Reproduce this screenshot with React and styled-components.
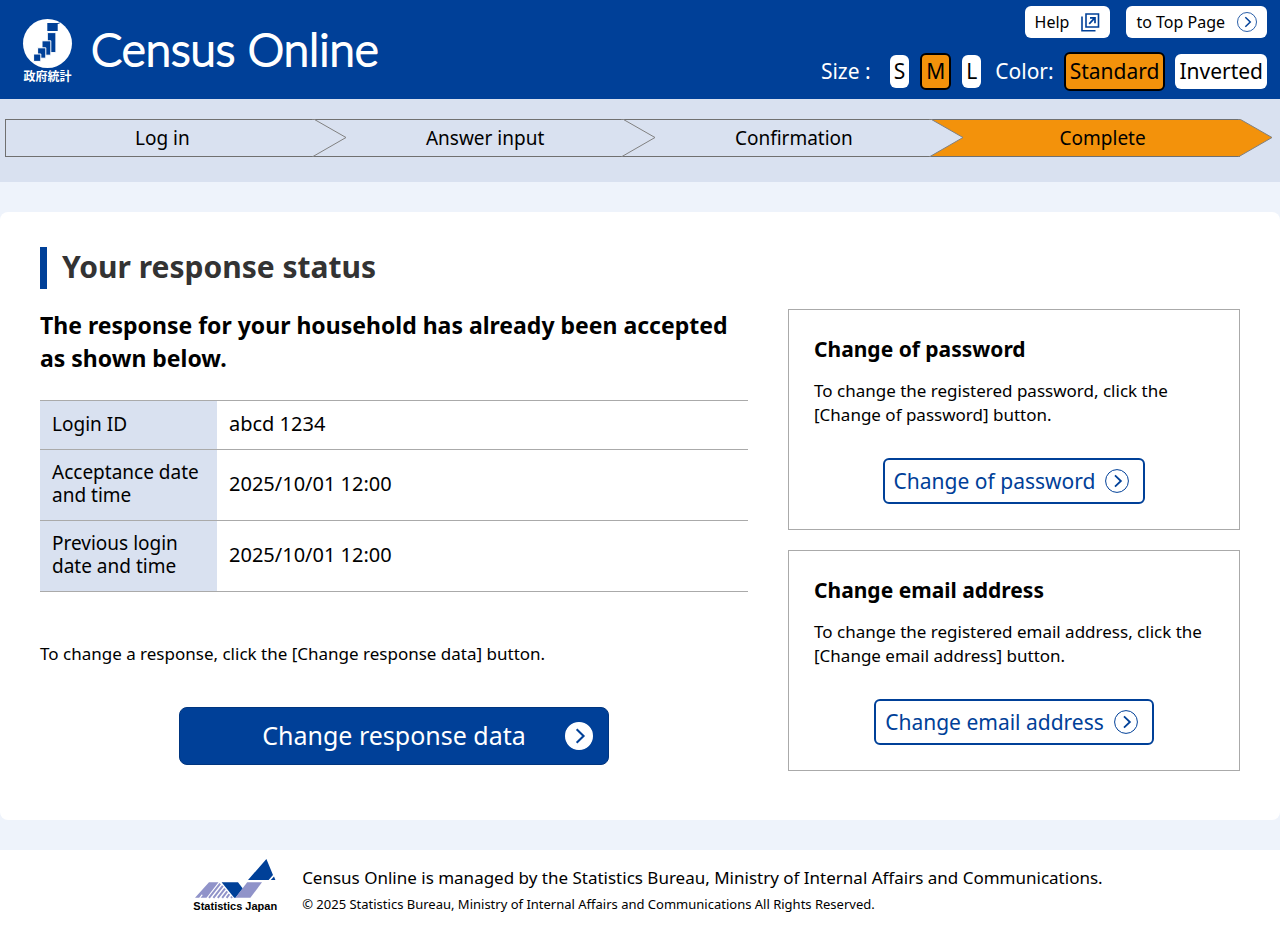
import { Fragment } from "react"
import styled, { createGlobalStyle, css } from "styled-components"

const GlobalStyle = createGlobalStyle`
  * {
    box-sizing: border-box;
  }

  body {
    margin: 0;
    background: #fff;
    color: #000;
    font-family: "Noto Sans", "Noto Sans CJK JP", sans-serif;
    font-size: 16px;
  }

  h1, h2, h3, p, ol {
    margin: 0;
    padding: 0;
  }

  button {
    font-family: inherit;
    cursor: pointer;
  }
`

const Header = styled.header`
  display: flex;
  justify-content: space-between;
  background: #004098;
  color: #fff;
  padding: 6px 13px 8px 22px;
`

const Brand = styled.div`
  display: flex;
  align-items: center;
  gap: 18px;
`

const Emblem = styled.div`
  display: flex;
  flex-direction: column;
  align-items: center;
  padding-top: 3px;
  font-family: "Noto Sans CJK JP", sans-serif;
  font-size: 12px;
  font-weight: 700;
  line-height: 14px;

  svg {
    display: block;
  }
`

const SiteName = styled.p`
  font-family: Lato, sans-serif;
  font-size: 46px;
  font-weight: 300;
  line-height: 56px;
  -webkit-text-stroke: 2px #fff;
`

const Tools = styled.div`
  display: flex;
  flex-direction: column;
  align-items: flex-end;
  gap: 14px;
`

const ToolRow = styled.div`
  display: flex;
  align-items: center;
  gap: ${({ $gap }) => $gap}px;
  font-size: 21px;
`

const ToolLabel = styled.span`
  padding: 0 ${({ $space }) => $space}px 2px 0;
`

const HeaderLink = styled.a`
  display: flex;
  align-items: center;
  gap: 12px;
  height: 32px;
  padding: 0 10px;
  border-radius: 6px;
  background: #fff;
  color: #000;
  font-size: 16px;
  text-decoration: none;
`

const Toggle = styled.button`
  height: ${({ $tall }) => ($tall ? 35 : 33)}px;
  padding: 0 4px 2px;
  border: 0;
  border-radius: 6px;
  background: #fff;
  color: #000;
  font-size: 21px;
  line-height: 30px;

  ${({ $active, $tall }) =>
    $active &&
    css`
      height: ${$tall ? 39 : 37}px;
      border: 2px solid #000;
      background: #f3920b;
    `}
`

const StepBand = styled.nav`
  background: #d9e1f0;
  padding: 20px 40px 25px 5px;
`

const Steps = styled.ol`
  display: grid;
  grid-template-columns: repeat(4, 1fr);
  list-style: none;
`

const Step = styled.li`
  position: relative;
  z-index: ${({ $order }) => $order};
  height: 38px;
  padding-left: ${({ $first }) => ($first ? 5 : 34)}px;
  border: solid #707070;
  border-width: 1px 0;
  border-left-width: ${({ $first }) => ($first ? 1 : 0)}px;
  background: ${({ $current }) => ($current ? "#f3920b" : "#d9e1f0")};
  font-size: 19px;
  line-height: 37px;
  text-align: center;
`

const StepTip = styled.svg`
  position: absolute;
  top: -1px;
  left: calc(100% - 2px);
`

const Main = styled.main`
  background: #eef3fb;
  padding: 30px 0;
`

const Panel = styled.div`
  padding: 35px 40px 49px;
  border-radius: 8px;
  background: #fff;
`

const PageTitle = styled.h1`
  padding: 0 0 2px 15px;
  border-left: 7px solid #004098;
  color: #333;
  font-size: 30px;
  line-height: 40px;
`

const Columns = styled.div`
  display: grid;
  grid-template-columns: minmax(0, 708fr) minmax(0, 452fr);
  gap: 40px;
  padding-top: 20px;
`

const Lead = styled.h2`
  font-size: 23px;
  line-height: 33px;
`

const StatusTable = styled.table`
  width: 100%;
  margin-top: 25px;
  border-collapse: collapse;
  font-size: 19px;
  line-height: 23px;

  tr {
    border-top: 1px solid #aaa;
    border-bottom: 1px solid #aaa;
  }

  th,
  td {
    padding: 11px 12px 13px;
    font-weight: 400;
    text-align: left;
  }

  th {
    width: 25%;
    background: #d9e1f0;
  }

  td {
    padding-bottom: 14px;
    font-size: 20px;
  }
`

const Text = styled.p`
  font-size: 17px;
  line-height: 24px;
`

const Note = styled(Text)`
  margin-top: 50px;
`

const PrimaryButton = styled.button`
  display: grid;
  grid-template-columns: 28px 1fr 28px;
  align-items: center;
  width: 430px;
  max-width: 100%;
  height: 58px;
  margin: 41px auto 0;
  padding: 0 15px;
  border: 1px solid #00357f;
  border-radius: 8px;
  background: #004098;
  color: #fff;
  font-size: 25px;

  span {
    grid-column: 2;
    padding-bottom: 2px;
  }
`

const Side = styled.div`
  display: flex;
  flex-direction: column;
  gap: 20px;
`

const Card = styled.section`
  padding: 24px 25px 25px;
  border: 1px solid #aaa;
`

const CardTitle = styled.h3`
  margin-bottom: 15px;
  font-size: 21px;
  line-height: 30px;
`

const OutlineButton = styled.button`
  display: flex;
  align-items: center;
  gap: 10px;
  height: 46px;
  margin: 31px auto 0;
  padding: 0 14px 0 9px;
  border: 2px solid #004098;
  border-radius: 6px;
  background: #fff;
  color: #004098;
  font-size: 21px;
`

const Footer = styled.footer`
  display: flex;
  justify-content: center;
  gap: 25px;
  padding: 9px 12px 16px 28px;
`

const BureauLogo = styled.div`
  font-family: "Liberation Sans", sans-serif;
  font-size: 11px;
  font-weight: 700;
  line-height: 12px;

  svg {
    display: block;
  }
`

const FooterText = styled.p`
  padding-top: 6px;
  font-size: 17px;
  line-height: 26px;
`

const Copyright = styled.small`
  display: block;
  font-size: 13px;
`

function CircleChevron({ size, filled }) {
  return (
    <svg width={size} height={size} viewBox="0 0 24 24" fill="none" aria-hidden="true">
      <circle
        cx="12"
        cy="12"
        r="11.4"
        fill="#fff"
        stroke={filled ? "#fff" : "#004098"}
        strokeWidth={filled ? 1.2 : 1}
      />
      <path d="M10 6.3 15.9 12 10 17.7" stroke="#004098" strokeWidth="1.8" />
    </svg>
  )
}

function NewWindowIcon() {
  return (
    <svg width="19" height="19" viewBox="0 0 19 19" fill="none" stroke="#004098" aria-hidden="true">
      <path d="M5 1h12.5v13H5z" strokeWidth="1.6" />
      <path d="M1 3.5V17.7h13.5" strokeWidth="1.6" />
      <path d="M8.2 10.8 13.6 5.2M9 4.8h5v5.4" strokeWidth="1.7" />
    </svg>
  )
}

function EmblemMark() {
  return (
    <svg width="51" height="51" viewBox="0 0 51 51" aria-hidden="true">
      <circle cx="25.5" cy="25.5" r="24.5" fill="#fff" />
      <path fill="#004098" d="M25.3 5h10.4v8H25.3zM35.7 5l2.4-.6-.6 1.2-1.8.4z" />
      <g fill="#004098" stroke="#fff">
        <path d="M25.3 14.6h8.6v20h-8.6z" />
        <path d="M20 22.8h8.8v14.4H20z" />
        <path d="M15.6 29.8h8.2v10.4h-8.2z" />
        <path d="M11.6 36h7.2v7.4h-7.2z" />
      </g>
    </svg>
  )
}

function BureauMark() {
  return (
    <svg width="83" height="41" viewBox="0 0 83 41" aria-hidden="true">
      <path
        fill="#9093c9"
        d="M16 23.3h9.5L13.5 38.8H7.6l2.2-2.8-1.2-.4-2.4 3.2H2z"
      />
      <path
        fill="none"
        stroke="#9093c9"
        strokeWidth="2"
        d="M16 38.8 27.2 24.6M20.4 38.8l9.4-12M24.8 38.8l7.2-9.2M29.2 38.8l5-6.4M33.6 38.8l2.8-3.6M38 38.8l1-1.2"
      />
      <path fill="#004098" d="M28.6 23.3h16.4l4.8 6.2-7.2 9.3h-1.4z" />
      <path fill="#9093c9" d="M54.2 23.3H69L57.4 38.8h-15z" />
      <path fill="#004098" d="M55 21 73.4 0 80 16 75.6 21zM81 17.6 82.4 21h-4.6z" />
    </svg>
  )
}

const steps = ["Log in", "Answer input", "Confirmation", "Complete"]

const status = [
  { label: "Login ID", value: "abcd 1234" },
  { label: "Acceptance date and time", value: "2025/10/01 12:00" },
  { label: "Previous login date and time", value: "2025/10/01 12:00" },
]

const cards = [
  {
    title: "Change of password",
    lines: [
      "To change the registered password, click the",
      "[Change of password] button.",
    ],
  },
  {
    title: "Change email address",
    lines: [
      "To change the registered email address, click the",
      "[Change email address] button.",
    ],
  },
]

function StepList({ current }) {
  return (
    <StepBand aria-label="Progress">
      <Steps>
        {steps.map((step, index) => {
          const isCurrent = step === current
          return (
            <Step
              key={step}
              $first={index === 0}
              $order={steps.length - index}
              $current={isCurrent}
              aria-current={isCurrent ? "step" : undefined}
            >
              {step}
              <StepTip width="36" height="38" viewBox="0 0 36 38" aria-hidden="true">
                <path
                  d="M0 .5H2.5L34 18.5 1 37.5H0z"
                  fill={isCurrent ? "#f3920b" : "#d9e1f0"}
                />
                <path d="M0 .5H2.5L34 18.5 1 37.5H0" fill="none" stroke="#808080" />
              </StepTip>
            </Step>
          )
        })}
      </Steps>
    </StepBand>
  )
}

function App() {
  return (
    <>
      <GlobalStyle />
      <Header>
        <Brand>
          <Emblem>
            <EmblemMark />
            政府統計
          </Emblem>
          <SiteName>Census Online</SiteName>
        </Brand>
        <Tools>
          <ToolRow $gap={16}>
            <HeaderLink href="#help">
              Help
              <NewWindowIcon />
            </HeaderLink>
            <HeaderLink href="#top">
              to Top Page
              <CircleChevron size={20} />
            </HeaderLink>
          </ToolRow>
          <ToolRow $gap={14}>
            <ToolRow $gap={11} role="group" aria-label="Size">
              <ToolLabel $space={8}>Size :</ToolLabel>
              <Toggle type="button">S</Toggle>
              <Toggle type="button" $active aria-pressed="true">
                M
              </Toggle>
              <Toggle type="button">L</Toggle>
            </ToolRow>
            <ToolRow $gap={10} role="group" aria-label="Color">
              <ToolLabel $space={0}>Color:</ToolLabel>
              <Toggle type="button" $tall $active aria-pressed="true">
                Standard
              </Toggle>
              <Toggle type="button" $tall>
                Inverted
              </Toggle>
            </ToolRow>
          </ToolRow>
        </Tools>
      </Header>

      <StepList current="Complete" />

      <Main>
        <Panel>
          <PageTitle>Your response status</PageTitle>
          <Columns>
            <div>
              <Lead>
                The response for your household has already been accepted as
                shown below.
              </Lead>
              <StatusTable>
                <tbody>
                  {status.map(({ label, value }) => (
                    <tr key={label}>
                      <th scope="row">{label}</th>
                      <td>{value}</td>
                    </tr>
                  ))}
                </tbody>
              </StatusTable>
              <Note>
                To change a response, click the [Change response data] button.
              </Note>
              <PrimaryButton type="button">
                <span>Change response data</span>
                <CircleChevron size={28} filled />
              </PrimaryButton>
            </div>
            <Side>
              {cards.map(({ title, lines }) => (
                <Card key={title}>
                  <CardTitle>{title}</CardTitle>
                  <Text>
                    {lines.map((line, index) => (
                      <Fragment key={line}>
                        {index > 0 && <br />}
                        {line}
                      </Fragment>
                    ))}
                  </Text>
                  <OutlineButton type="button">
                    {title}
                    <CircleChevron size={24} />
                  </OutlineButton>
                </Card>
              ))}
            </Side>
          </Columns>
        </Panel>
      </Main>

      <Footer>
        <BureauLogo>
          <BureauMark />
          Statistics Japan
        </BureauLogo>
        <FooterText>
          Census Online is managed by the Statistics Bureau, Ministry of
          Internal Affairs and Communications.
          <Copyright>
            © 2025 Statistics Bureau, Ministry of Internal Affairs and
            Communications All Rights Reserved.
          </Copyright>
        </FooterText>
      </Footer>
    </>
  )
}

export default App
